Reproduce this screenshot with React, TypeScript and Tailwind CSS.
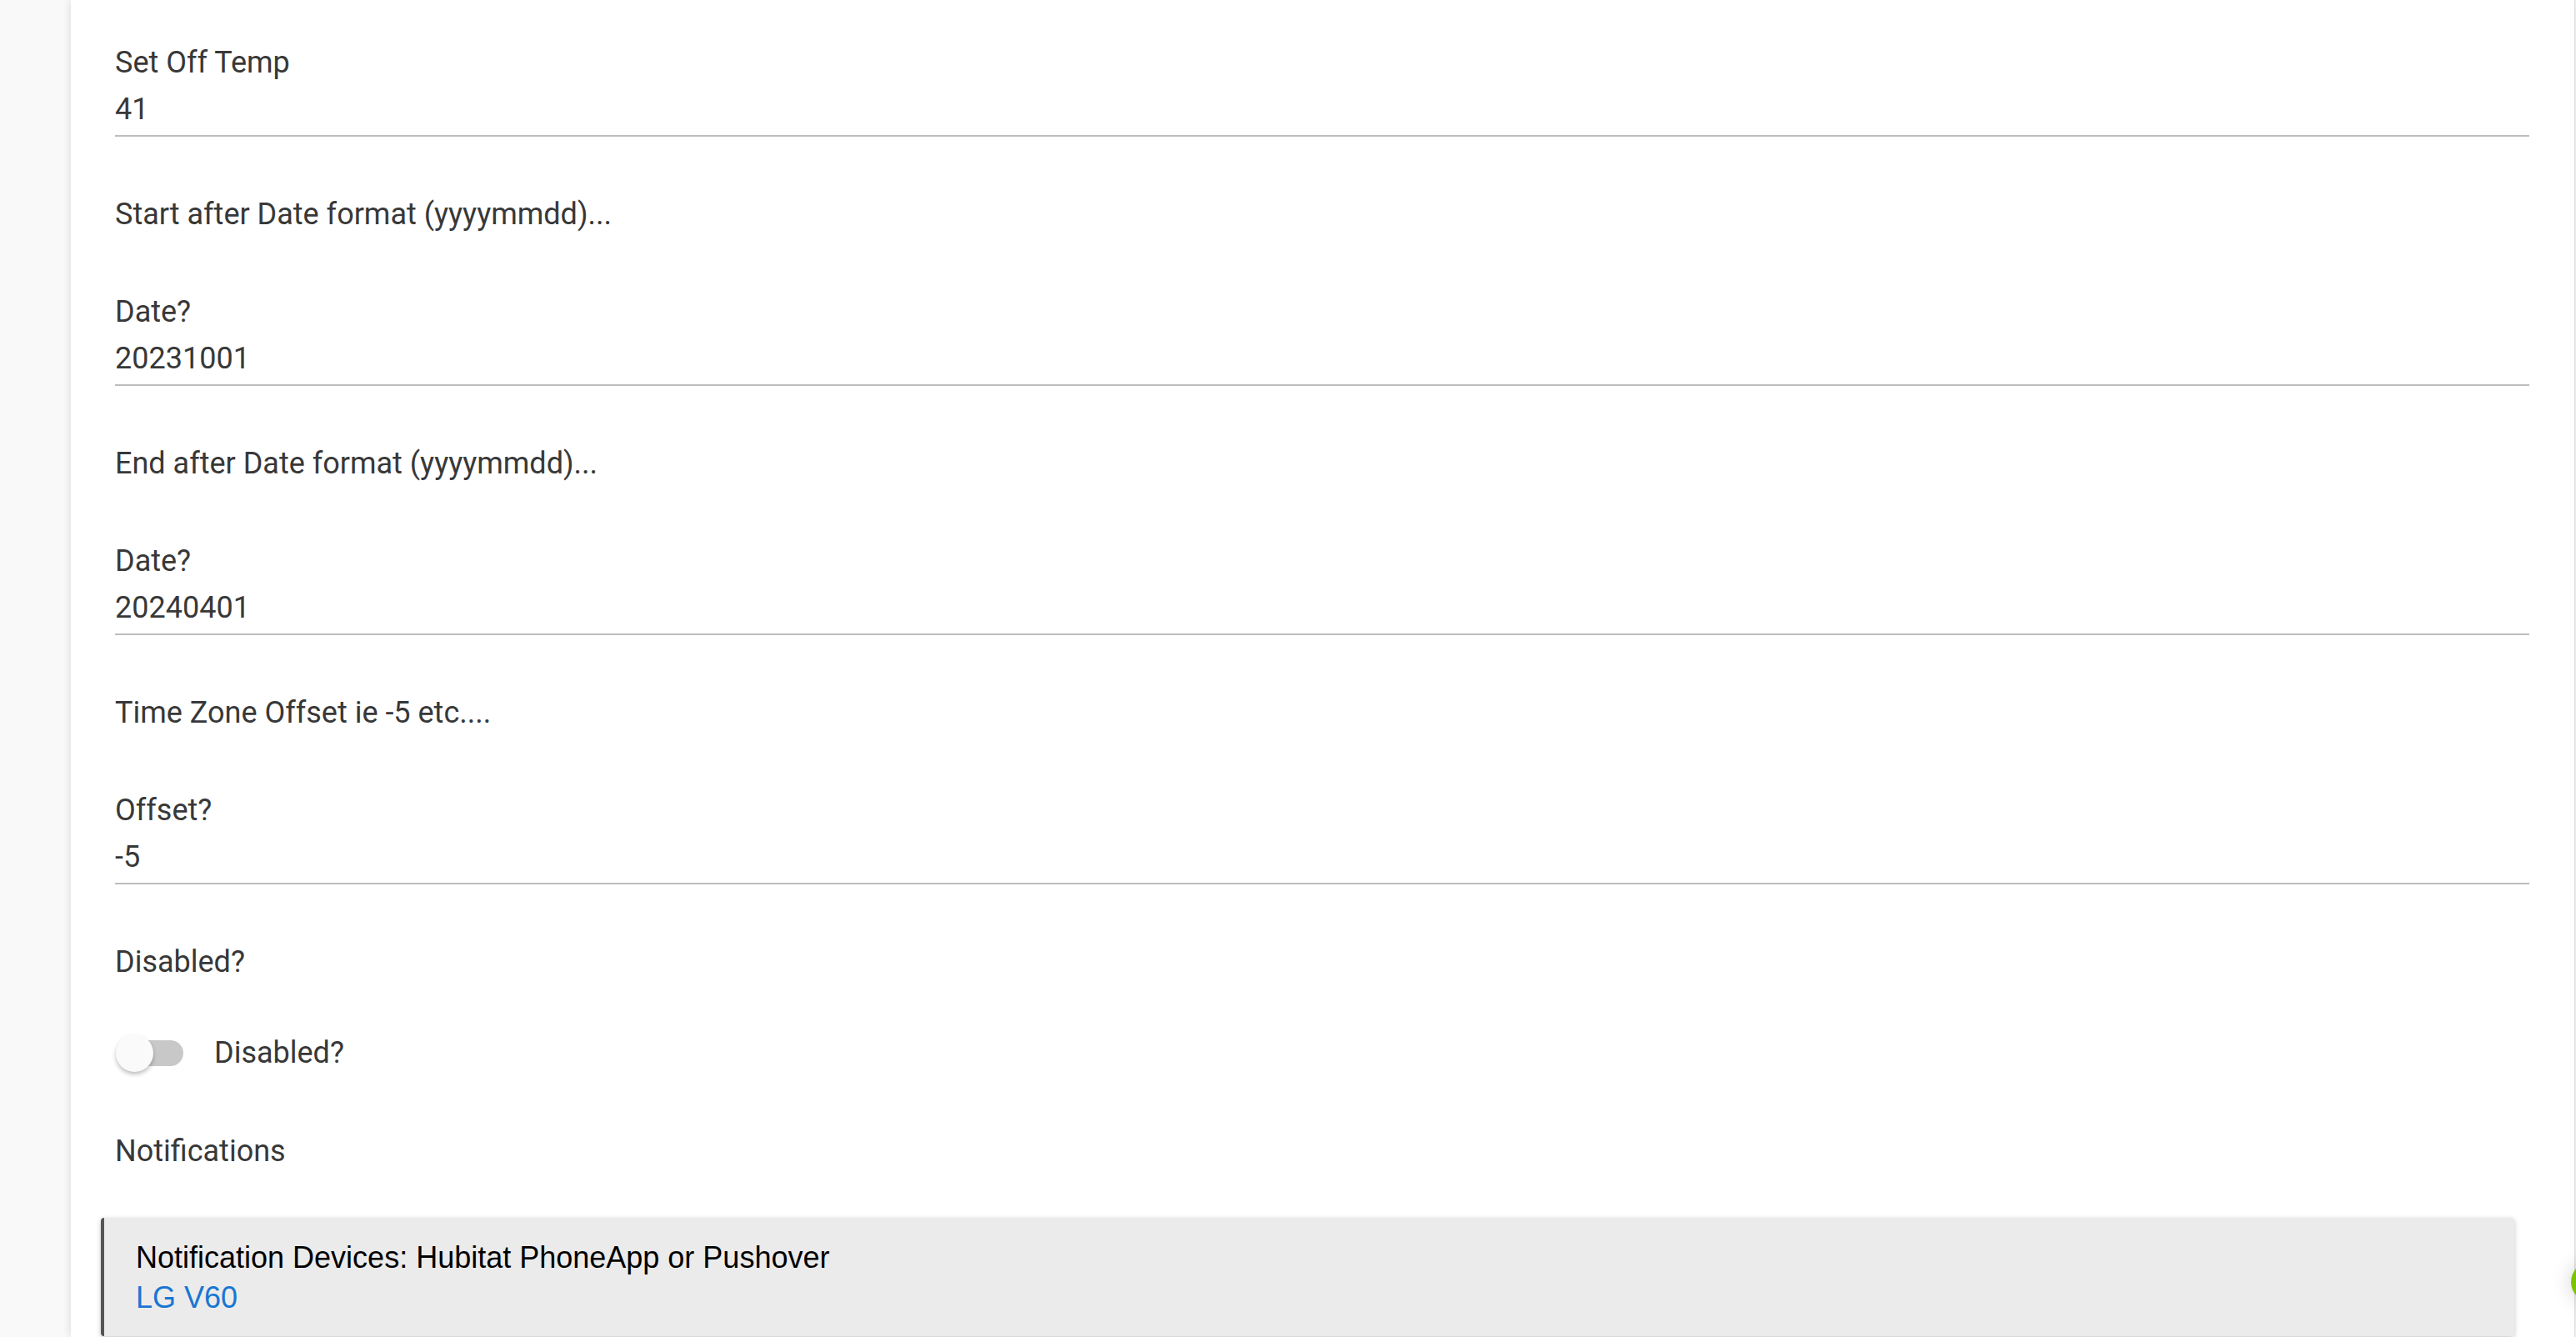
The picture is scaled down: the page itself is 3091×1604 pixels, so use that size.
import React from 'react';

interface FieldProps {
  label: string;
  value: string;
}

// text input in the "filled underline" style the hub pages use
const Field: React.FC<FieldProps> = ({ label, value }) => (
  <div>
    <div className="h-[48px] leading-[48px]">{label}</div>
    <div className="mt-[8px] h-[48px] leading-[48px]">{value}</div>
    <div className="mt-[7px] h-[2px] bg-[#bdbdbd]" />
  </div>
);

const Para: React.FC<{ children: React.ReactNode }> = ({ children }) => (
  <div className="h-[48px] leading-[48px]">{children}</div>
);

const Toggle: React.FC<{ label: string }> = ({ label }) => (
  <div className="flex h-[48px] items-center">
    <div className="relative h-[48px] w-[82px] shrink-0">
      <div className="absolute left-[12px] top-[9px] h-[31px] w-[70px] rounded-full bg-[#c8c8c8]" />
      <div className="absolute left-[1px] top-[2px] h-[45px] w-[45px] rounded-full bg-[#fafafa] shadow-[0_3px_5px_rgba(0,0,0,0.25)]" />
    </div>
    <span className="ml-[37px]">{label}</span>
  </div>
);

const App: React.FC = () => {
  return (
    <div className="relative flex h-[1604px] w-[3091px] overflow-hidden bg-[#f9f9f9]">
      {/* green fab peeking in at the right edge */}
      <div className="absolute left-[3085px] top-[1514px] z-20 h-[48px] w-[48px] rounded-full bg-[#7cc400] shadow-[0_0_24px_rgba(0,0,0,0.18)]" />

      <div className="relative z-10 ml-[85px] h-full w-[3004px] bg-white pl-[53px] pr-[54px] pt-[51px] text-[36px] text-[#383838] shadow-[0_0_10px_rgba(0,0,0,0.14)] [font-family:Roboto,'Liberation_Sans',sans-serif]">
        <div className="flex flex-col gap-[69px]">
          <Field label="Set Off Temp" value="41" />
          <Para>Start after Date format (yyyymmdd)...</Para>
          <Field label="Date?" value="20231001" />
          <Para>End after Date format (yyyymmdd)...</Para>
          <Field label="Date?" value="20240401" />
          <Para>Time Zone Offset ie -5 etc....</Para>
          <Field label="Offset?" value="-5" />
          <Para>Disabled?</Para>
        </div>

        <div className="mt-[61px]">
          <Toggle label="Disabled?" />
        </div>

        <div className="mt-[70px]">
          <Para>Notifications</Para>
        </div>

        <div className="ml-[-17px] mr-[18px] mt-[56px] rounded-[4px] border-l-4 border-[#555555] bg-[#ebebeb] pb-[22px] pl-[38px] pt-[24px] shadow-[0_2px_6px_rgba(0,0,0,0.22)] [font-family:'Liberation_Sans',Arial,sans-serif]">
          <div className="h-[48px] leading-[48px] text-black">
            Notification Devices: Hubitat PhoneApp or Pushover
          </div>
          <div className="h-[48px] leading-[48px] text-[#1976d2]">LG V60</div>
        </div>
      </div>
      <div className="relative z-10 h-full w-[1px] bg-[#dddddd]" />
    </div>
  );
};

export default App;
